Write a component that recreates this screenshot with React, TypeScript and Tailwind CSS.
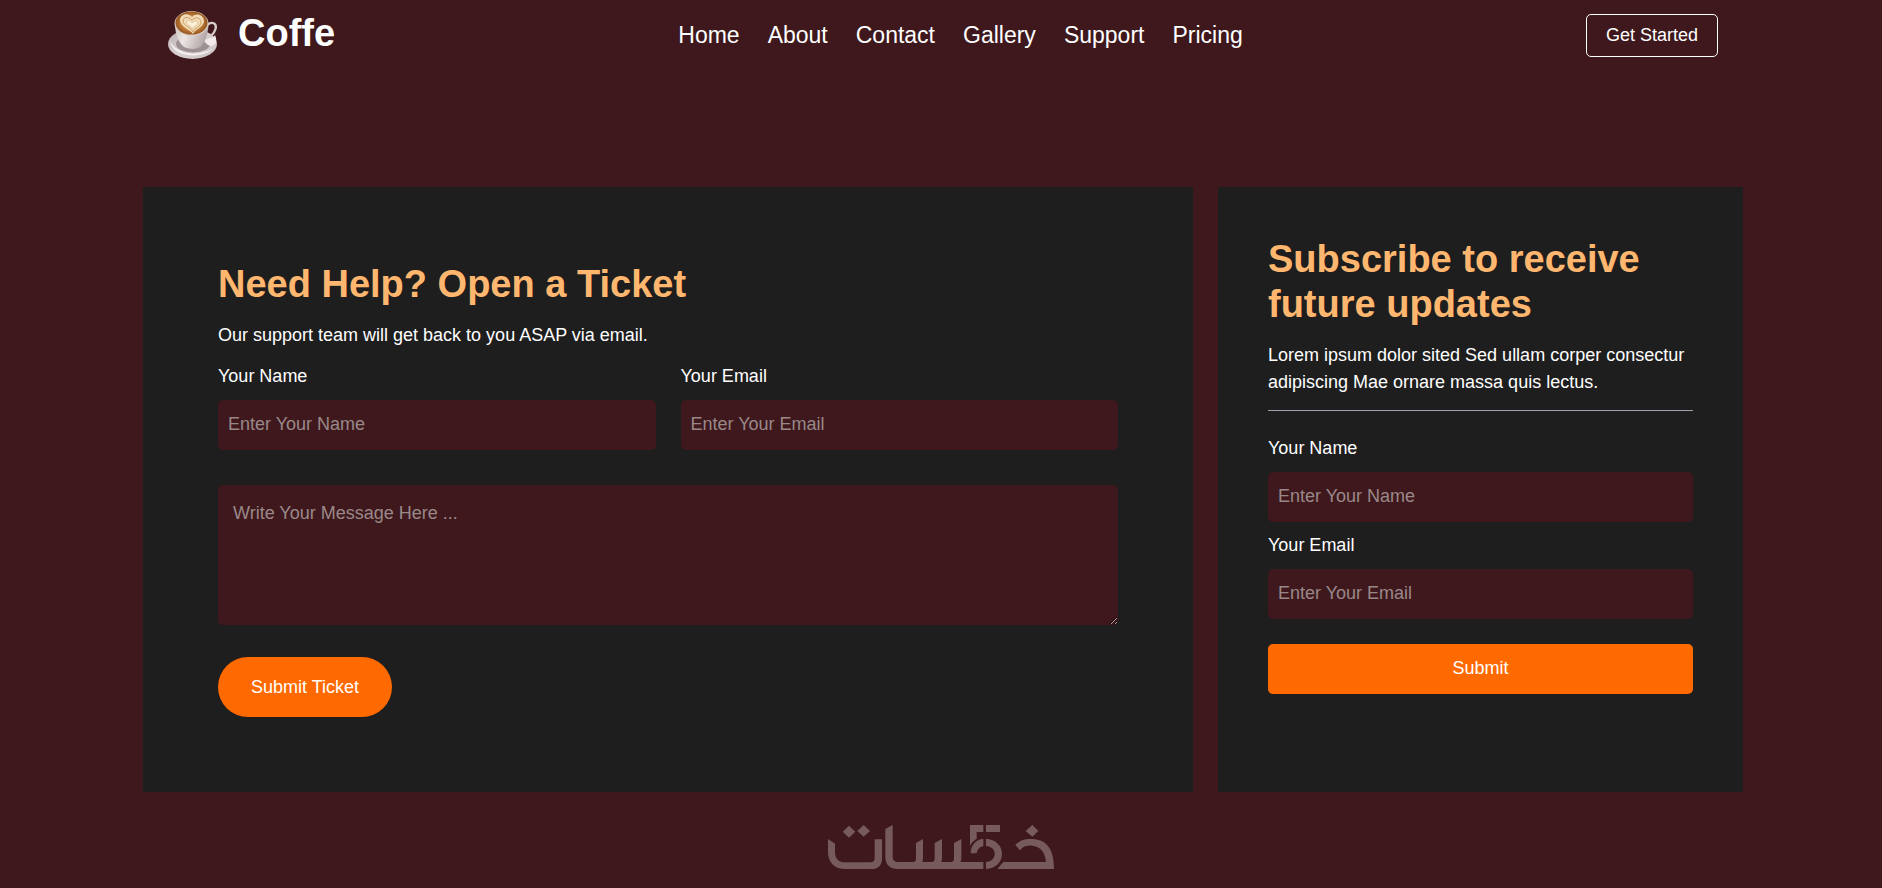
import React from "react";

const links = ["Home", "About", "Contact", "Gallery", "Support", "Pricing"];

function CoffeeCup() {
  return (
    <svg viewBox="0 0 50 50" className="size-[50px]" aria-hidden="true">
      <defs>
        <linearGradient id="saucer" x1="0" y1="0" x2="1" y2="1">
          <stop offset="0" stopColor="#b9aeb0" />
          <stop offset="0.5" stopColor="#d9d1d1" />
          <stop offset="1" stopColor="#cbc2c2" />
        </linearGradient>
        <linearGradient id="cup" x1="0" y1="0" x2="1" y2="0.3">
          <stop offset="0" stopColor="#c9bfbe" />
          <stop offset="0.4" stopColor="#ece6e5" />
          <stop offset="1" stopColor="#b3a6a6" />
        </linearGradient>
        <radialGradient id="crema">
          <stop offset="0" stopColor="#dba15c" />
          <stop offset="0.65" stopColor="#c07c3a" />
          <stop offset="1" stopColor="#94551f" />
        </radialGradient>
      </defs>
      <ellipse cx="24.5" cy="34" rx="24.5" ry="15" fill="url(#saucer)" />
      <path d="M2 31c1 9 11 14 22 14.500c8 0 16-2 21-7c-7 4-14 5-22 5c-10-1-17-5-21-12.500z" fill="#f4f0ef" />
      <ellipse cx="25" cy="34" rx="17" ry="8.500" fill="#9d9092" />
      <path d="M38 27c4 2 8 1 9-2c2 5 2 9-3 11c-3 0-6-2-8-5z" fill="#f0ebea" />
      <path d="M39 15c5-4 10-2 8.500 4c-1.500 5-5 8-10 9.500" fill="none" stroke="#d6cccb" strokeWidth="2.400" />
      <path d="M7 14c0 10 4 20 10 23.500c5 2 12 2 16-1c4-4 7-12 7.500-22z" fill="url(#cup)" />
      <ellipse cx="23.500" cy="13.500" rx="17" ry="12.500" fill="#ddd0c6" />
      <ellipse cx="23.500" cy="13" rx="16" ry="11.500" fill="url(#crema)" />
      <path d="M25 24c-2-4-13-7-13-14c0-6 8-8 12-3c4-5 12-2 12 4c0 6-9 8-11 13z" fill="#f0dcb8" />
      <path d="M25 22c-2-5-10-6-10-11c0-4 5-5 9-1c4-4 9-2 9 2c0 5-7 6-8 10z" fill="none" stroke="#cf9c60" strokeWidth="1" />
      <path d="M24.500 19c-1-3-6-4-6-7c0-2 4-2 5.500 1c2-3 6-2 6 0c0 3-5 3-5.500 6z" fill="#fbf1da" stroke="#d9ad76" strokeWidth="0.600" />
    </svg>
  );
}

function FooterLogo() {
  return (
    <svg viewBox="0 0 678 132" className="h-[44px] w-[226px]" role="img" aria-label="خمسات" fill="#765a5d">
      <path d="M63 2l19 18l-19 18l-19-18zM107 0l19 18l-19 17l-19-17zM613 0l18 18l-18 17l-20-17z" />
      <path d="M0 42l21 14v24c0 22 12 32 30 32h76c9 0 13-4 13-12V43h22v58c0 20-12 31-32 31H52C20 132 0 112 0 80z" />
      <path d="M172 12l22-12v96c0 10 6 15 16 15h45c6 0 9-4 9-10V54l21-12v57c0 5-1 9-2 12h28c6 0 9-4 9-10V54l22-12v57c0 5-1 9-2 12h28c6 0 10-4 10-10V54l22-12v57c0 5-1 9-3 12h69v21H211c-26 0-39-14-39-36z" />
      <path d="M426 0h40v21h-20v20c-9 5-15 12-20 21zM474 0h42v21h-42zM466 41v23c-12 2-18 10-20 21h-18c0-24 16-42 38-44zM474 41c28 2 48 20 48 45c0 26-20 44-48 46v-21c16-2 26-11 26-25c0-13-10-22-26-23z" />
      <path d="M562 60c15-16 32-19 51-18c45 2 65 32 65 90H508l18-21h128c-3-31-17-47-42-49c-16-1-27 3-36 14z" />
    </svg>
  );
}

type FieldProps = { id: string; label: string; type: string; placeholder: string };

function Field({ id, label, type, placeholder }: FieldProps) {
  return (
    <div className="flex flex-col gap-[10px]">
      <label htmlFor={id}>{label}</label>
      <input
        id={id}
        type={type}
        placeholder={placeholder}
        className="h-[50px] w-full rounded-[5px] bg-[#3e181c] px-[10px] pb-[2px] placeholder:text-[#9a8889]"
      />
    </div>
  );
}

export default function App() {
  return (
    <div className="min-h-screen bg-[#3e181c] pl-1 font-['Liberation_Sans',Arial,sans-serif] text-[18px] leading-[27px] text-white">
      <header className="mx-auto flex max-w-[1600px] items-center justify-between px-[25px] pt-[10px]">
        <a href="#" className="flex items-center gap-[20px]">
          <CoffeeCup />
          <span className="pb-1 text-[38px] leading-[45px] font-bold">Coffe</span>
        </a>
        <nav className="flex gap-[28px] text-[23px]">
          {links.map((name) => (
            <a key={name} href="#">
              {name}
            </a>
          ))}
        </nav>
        <button type="button" className="h-[43px] rounded-[5px] border border-white px-[19px]">
          Get Started
        </button>
      </header>

      <main className="mx-auto mt-[127px] grid max-w-[1600px] gap-[25px] lg:grid-cols-[2fr_1fr]">
        <section className="bg-[#1e1e1e] p-[75px]">
          <h1 className="text-[38px] leading-[45px] font-bold text-[#ffb76f]">Need Help? Open a Ticket</h1>
          <p className="mt-[15px]">Our support team will get back to you ASAP via email.</p>
          <form className="mt-[14px]">
            <div className="grid grid-cols-2 gap-[25px]">
              <Field id="ticket-name" label="Your Name" type="text" placeholder="Enter Your Name" />
              <Field id="ticket-email" label="Your Email" type="email" placeholder="Enter Your Email" />
            </div>
            <textarea
              aria-label="Message"
              placeholder="Write Your Message Here ..."
              className="mt-[35px] block h-[140px] w-full rounded-[5px] bg-[#3e181c] p-[15px] placeholder:text-[#9a8889]"
            />
            <button type="submit" className="mt-[32px] h-[60px] rounded-full bg-[#ff6a00] px-[33px]">
              Submit Ticket
            </button>
          </form>
        </section>

        <section className="bg-[#1e1e1e] p-[50px]">
          <h2 className="text-[38px] leading-[45px] font-bold text-[#ffb76f]">Subscribe to receive future updates</h2>
          <p className="mt-[15px]">Lorem ipsum dolor sited Sed ullam corper consectur adipiscing Mae ornare massa quis lectus.</p>
          <hr className="mt-[14px] border-[#9ca3af]" />
          <form className="mt-[24px] flex flex-col gap-[10px]">
            <Field id="news-name" label="Your Name" type="text" placeholder="Enter Your Name" />
            <Field id="news-email" label="Your Email" type="email" placeholder="Enter Your Email" />
            <button type="submit" className="mt-[15px] h-[50px] rounded-[5px] bg-[#ff6a00] pb-[2px]">
              Submit
            </button>
          </form>
        </section>
      </main>

      <footer className="flex justify-center pt-[33px] pr-1 pb-[19px]">
        <FooterLogo />
      </footer>
    </div>
  );
}
